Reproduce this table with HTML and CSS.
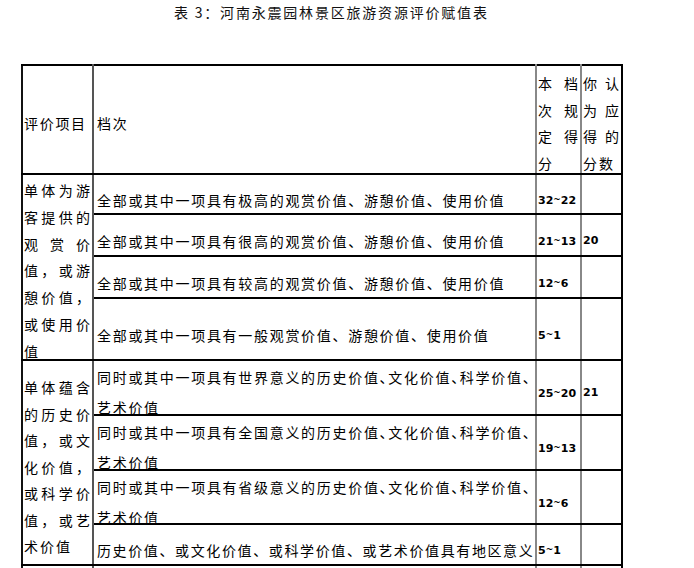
FILE: index.html
```html
<!DOCTYPE html>
<html lang="zh-CN">
<head>
<meta charset="utf-8">
<title>河南永震园林景区旅游资源评价赋值表</title>
<link rel="stylesheet" href="styles.css">
</head>
<body>
<main class="page">
  <h1 class="title">表 3：河南永震园林景区旅游资源评价赋值表</h1>
  <table class="grid">
    <colgroup>
      <col class="w1"><col class="w2"><col class="w3"><col class="w4">
    </colgroup>
    <tr class="r-head">
      <th class="c1 hd">评价项目</th>
      <th class="c2 hd hd2">档次</th>
      <th class="c3 vt"><div class="stack">本档次规定得分</div></th>
      <th class="c4 vt"><div class="stack">你认为应得的分数</div></th>
    </tr>
    <tr class="r40">
      <td class="c1 grp" rowspan="4"><div class="g1">单体为游客提供的观赏价值，或游憩价值，或使用价值</div></td>
      <td class="c2 one">全部或其中一项具有极高的观赏价值、游憩价值、使用价值</td>
      <td class="c3 num">32<span class="t">~</span>22</td>
      <td class="c4 num"></td>
    </tr>
    <tr class="r42">
      <td class="c2 one">全部或其中一项具有很高的观赏价值、游憩价值、使用价值</td>
      <td class="c3 num">21<span class="t">~</span>13</td>
      <td class="c4 num">20</td>
    </tr>
    <tr class="r42">
      <td class="c2 one">全部或其中一项具有较高的观赏价值、游憩价值、使用价值</td>
      <td class="c3 num">12<span class="t">~</span>6</td>
      <td class="c4 num"></td>
    </tr>
    <tr class="r62">
      <td class="c2 one">全部或其中一项具有一般观赏价值、游憩价值、使用价值</td>
      <td class="c3 num">5<span class="t">~</span>1</td>
      <td class="c4 num"></td>
    </tr>
    <tr class="r55">
      <td class="c1 grp g2" rowspan="4">单体蕴含的历史价值，或文化价值，或科学价值，或艺术价值</td>
      <td class="c2 two"><div class="lines">同时或其中一项具有世界意义的历史价值<span class="half">、</span>文化价值<span class="half">、</span>科学价值<span class="half">、</span>艺术价值</div></td>
      <td class="c3 num">25<span class="t">~</span>20</td>
      <td class="c4 num">21</td>
    </tr>
    <tr class="r55">
      <td class="c2 two"><div class="lines">同时或其中一项具有全国意义的历史价值<span class="half">、</span>文化价值<span class="half">、</span>科学价值<span class="half">、</span>艺术价值</div></td>
      <td class="c3 num">19<span class="t">~</span>13</td>
      <td class="c4 num"></td>
    </tr>
    <tr class="r54">
      <td class="c2 two"><div class="lines">同时或其中一项具有省级意义的历史价值<span class="half">、</span>文化价值<span class="half">、</span>科学价值<span class="half">、</span>艺术价值</div></td>
      <td class="c3 num">12<span class="t">~</span>6</td>
      <td class="c4 num"></td>
    </tr>
    <tr class="r41">
      <td class="c2 one tight">历史价值、或文化价值、或科学价值、或艺术价值具有地区意义</td>
      <td class="c3 num">5<span class="t">~</span>1</td>
      <td class="c4 num"></td>
    </tr>
    <tr class="r-more">
      <td class="c1"></td>
      <td class="c2"></td>
      <td class="c3"></td>
      <td class="c4"></td>
    </tr>
  </table>
</main>
</body>
</html>
```

FILE: styles.css
```css
* { box-sizing: border-box; }

html, body {
  margin: 0;
  padding: 0;
  background: #fff;
}

body {
  font-family: "Noto Sans CJK SC", "Noto Sans CJK JP", sans-serif;
  font-size: 14px;
  color: #000;
}

.page {
  padding: 3px 0 0 21px;
}

.title {
  margin: 0 0 0 153px;
  height: 61px;
  font-size: 14px;
  font-weight: normal;
  line-height: 18px;
  letter-spacing: 1.8px;
  color: #111;
}

.grid {
  border-collapse: collapse;
  table-layout: fixed;
  width: 600px;
}

.w1 { width: 71px; }
.w2 { width: 443px; }
.w3 { width: 45px; }
.w4 { width: 41px; }

.grid th,
.grid td {
  border-top: 2px solid #000;
  border-bottom: 2px solid #000;
  padding: 0;
  font-weight: normal;
  text-align: left;
  letter-spacing: 1.7px;
  line-height: 20px;
}

.c1 { border-left: 2px solid #111; border-right: 2px solid #555; }
.c2 { border-left: 2px solid #555; border-right: 2px solid #888; }
.c3 { border-left: 2px solid #888; border-right: 2px solid #888; }
.c4 { border-left: 2px solid #888; border-right: 2px solid #000; }

.r-head { height: 109px; }
.r40 { height: 40px; }
.r42 { height: 42px; }
.r62 { height: 62px; }
.r55 { height: 55px; }
.r54 { height: 54px; }
.r41 { height: 41px; }
.r-more { height: 30px; }

/* header */
.grid .hd {
  vertical-align: middle;
  padding: 6px 0 0 1px;
}
.grid .hd2 { padding-left: 3px; }

.grid .vt {
  vertical-align: top;
  text-align: justify;
  letter-spacing: 2px;
  padding: 4px 0 0 1px;
}
.stack {
  height: 100px;
  line-height: 26.6px;
}

/* group cells in first column */
.grid .grp {
  vertical-align: top;
  text-align: justify;
  padding: 2px 0 0 1px;
  letter-spacing: 2px;
}
.g1 {
  height: 180px;
  line-height: 26.8px;
}
.grid .g2 {
  padding-top: 13px;
  line-height: 26.5px;
}

/* second column */
.grid .one {
  vertical-align: middle;
  white-space: nowrap;
  padding: 11px 0 0 3px;
}
.grid .tight { letter-spacing: 1.62px; }

.grid .two {
  vertical-align: top;
  padding: 2px 0 0 3px;
}
.lines {
  height: 50px;
  line-height: 29.5px;
}
.half { letter-spacing: -5.3px; }

/* score numbers */
.grid .num {
  vertical-align: middle;
  padding: 11px 0 0 1px;
  font-family: "DejaVu Sans", sans-serif;
  font-weight: bold;
  font-size: 11px;
  letter-spacing: 0;
}
.t {
  font-size: 9px;
  vertical-align: 2px;
}
```
